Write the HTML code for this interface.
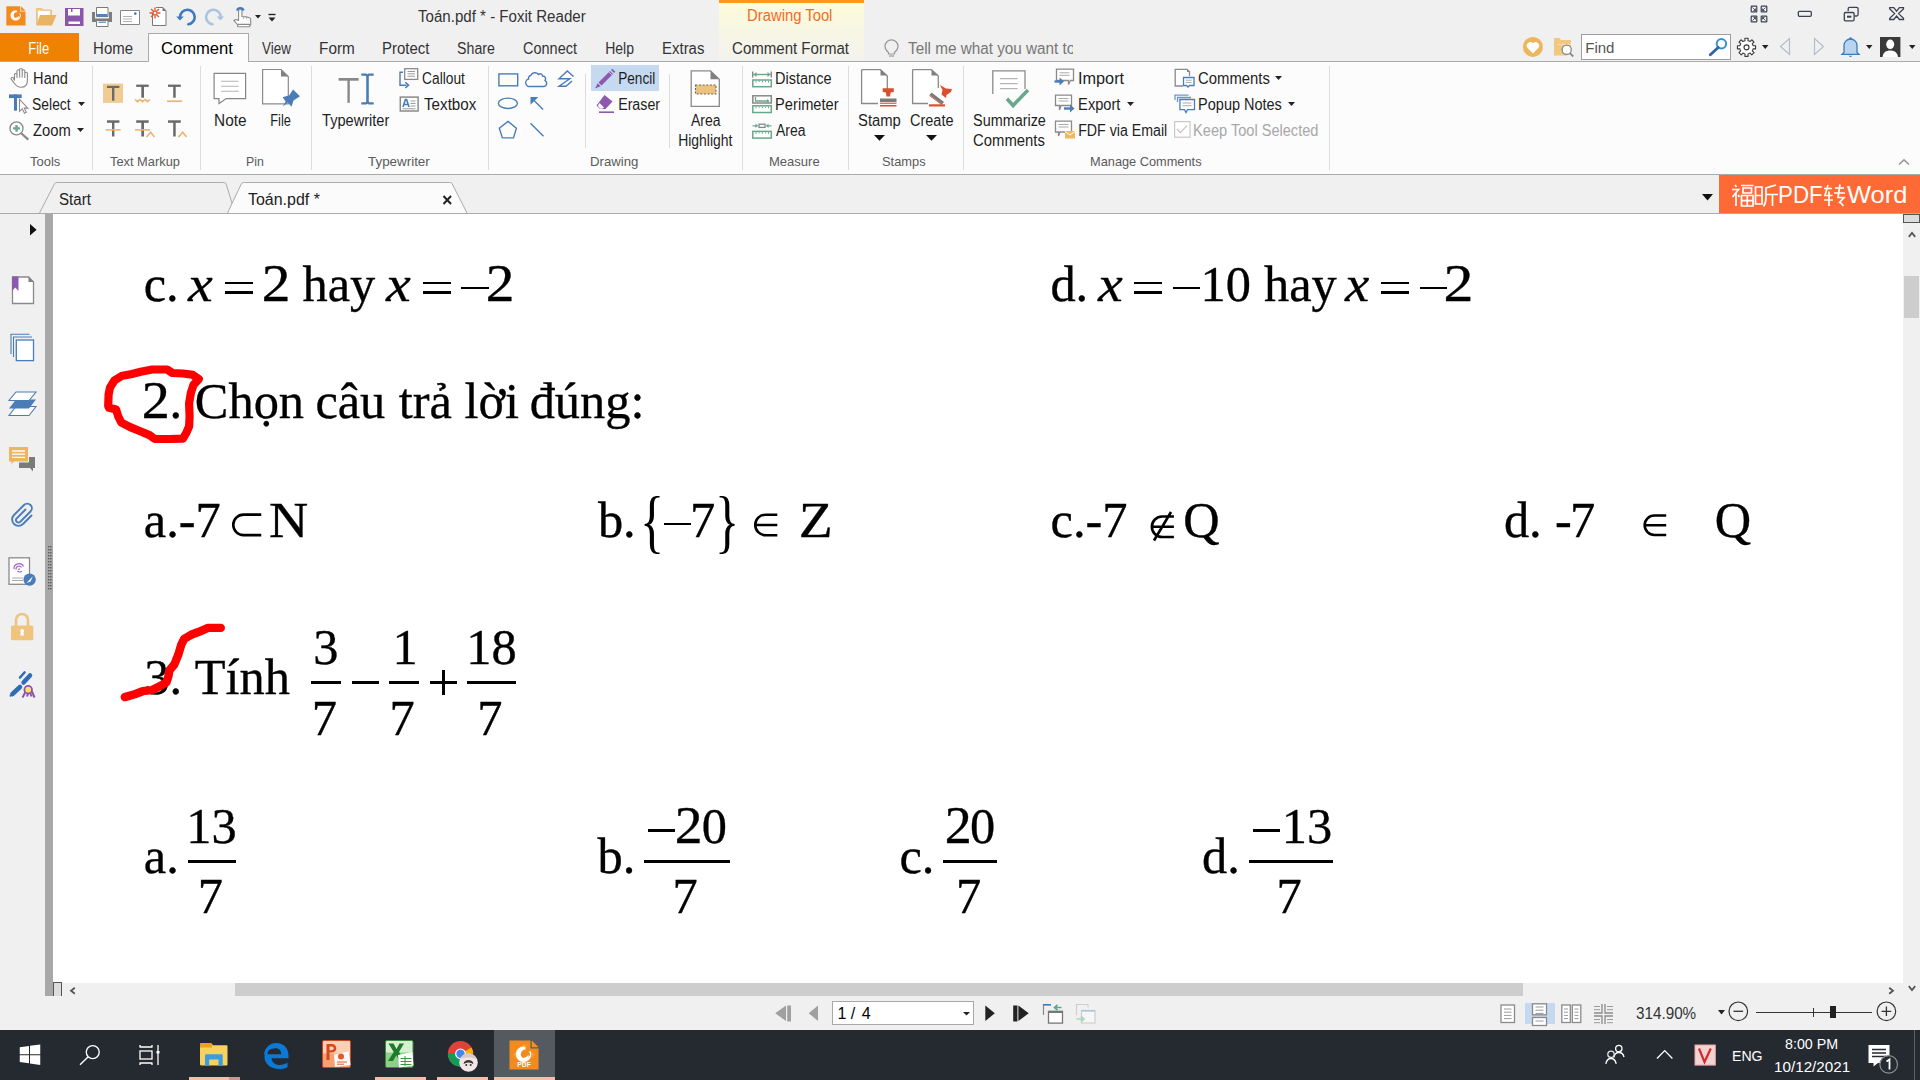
<!DOCTYPE html>
<html><head><meta charset="utf-8">
<style>
*{margin:0;padding:0;box-sizing:border-box}
html,body{width:1920px;height:1080px;overflow:hidden;background:#f0f0f0;font-family:"Liberation Sans",sans-serif;color:#1e1e1e}
.a{position:absolute}
.t{position:absolute;white-space:nowrap;line-height:1;font-size:15px}
.s{position:absolute;white-space:nowrap;line-height:1;font-family:"Liberation Serif",serif;color:#000}
svg{position:absolute;overflow:visible}
</style></head><body>
<!-- title bar -->
<div class="a" id="titlebar" style="left:0;top:0;width:1920px;height:33px;background:#f0f0f0"></div>
<!-- drawing tool context header -->
<div class="a" style="left:719px;top:0;width:145px;height:61px;background:linear-gradient(#fdfcd9,#f6f5e6 60%,#f3f3ee)"></div>
<div class="a" style="left:719px;top:0;width:145px;height:3px;background:#fb9a18"></div>
<!-- tab row -->
<div class="a" style="left:0;top:33px;width:79px;height:28px;background:#ef8200"></div>
<div class="a" style="left:148px;top:33px;width:101px;height:29px;background:#fcfcfc;border:1px solid #ababab;border-bottom:none"></div>
<!-- ribbon body -->
<div class="a" style="left:0;top:61px;width:1920px;height:114px;background:#fcfcfc;border-top:1px solid #ababab;border-bottom:1px solid #ababab"></div>
<div class="a" style="left:149px;top:61px;width:99px;height:2px;background:#fcfcfc"></div>
<!-- doc tab bar -->
<div class="a" style="left:0;top:175px;width:1920px;height:39px;background:#f0f0f0;border-bottom:1px solid #ababab"></div>
<!-- left nav -->
<div class="a" style="left:0;top:214px;width:45px;height:782px;background:#f0f0f0"></div>
<div class="a" style="left:45px;top:214px;width:8px;height:782px;background:#a8a8a8"></div>
<!-- doc area -->
<div class="a" id="doc" style="left:53px;top:214px;width:1850px;height:769px;background:#fff"></div>
<!-- v scrollbar -->
<div class="a" style="left:1903px;top:214px;width:17px;height:782px;background:#f0f0f0"></div>
<div class="a" style="left:1904px;top:276px;width:15px;height:42px;background:#cdcdcd"></div>
<!-- h scrollbar -->
<div class="a" style="left:53px;top:983px;width:1850px;height:13px;background:#f0f0f0"></div>
<div class="a" style="left:235px;top:983px;width:1288px;height:13px;background:#cdcdcd"></div>
<!-- status bar -->
<div class="a" style="left:0;top:996px;width:1920px;height:34px;background:#f0f0f0"></div>
<!-- taskbar -->
<div class="a" style="left:0;top:1030px;width:1920px;height:50px;background:#252a31"></div>
<div class="t" style="left:143.68px;top:255.50px;font-size:50.40px;line-height:56px;font-family:'Liberation Serif',serif;color:#000;-webkit-text-stroke:0.35px #000">c.</div>
<div class="t" style="left:187.62px;top:255.50px;font-size:50.40px;line-height:56px;font-family:'Liberation Serif',serif;font-style:italic;color:#000;-webkit-text-stroke:0.35px #000;transform:scaleX(1.1054);transform-origin:-0.62px 0">x</div>
<div class="a" style="left:225px;top:281.8px;width:27.5px;height:2.6px;background:#000;"></div>
<div class="a" style="left:225px;top:291.1px;width:27.5px;height:2.6px;background:#000;"></div>
<div class="t" style="left:261.79px;top:255.50px;font-size:50.40px;line-height:56px;font-family:'Liberation Serif',serif;color:#000;-webkit-text-stroke:0.35px #000;transform:scale(1.138,1.05);transform-origin:2.21px 45px">2</div>
<div class="t" style="left:302.51px;top:255.50px;font-size:50.40px;line-height:56px;font-family:'Liberation Serif',serif;color:#000;-webkit-text-stroke:0.35px #000">hay</div>
<div class="t" style="left:385.62px;top:255.50px;font-size:50.40px;line-height:56px;font-family:'Liberation Serif',serif;font-style:italic;color:#000;-webkit-text-stroke:0.35px #000;transform:scaleX(1.1054);transform-origin:-0.62px 0">x</div>
<div class="a" style="left:423px;top:281.8px;width:27.5px;height:2.6px;background:#000;"></div>
<div class="a" style="left:423px;top:291.1px;width:27.5px;height:2.6px;background:#000;"></div>
<div class="a" style="left:461px;top:286.5px;width:28px;height:2.6px;background:#000;"></div>
<div class="t" style="left:485.79px;top:255.50px;font-size:50.40px;line-height:56px;font-family:'Liberation Serif',serif;color:#000;-webkit-text-stroke:0.35px #000;transform:scale(1.138,1.05);transform-origin:2.21px 45px">2</div>
<div class="t" style="left:1050.38px;top:255.50px;font-size:50.40px;line-height:56px;font-family:'Liberation Serif',serif;color:#000;-webkit-text-stroke:0.35px #000">d.</div>
<div class="t" style="left:1097.62px;top:255.50px;font-size:50.40px;line-height:56px;font-family:'Liberation Serif',serif;font-style:italic;color:#000;-webkit-text-stroke:0.35px #000;transform:scaleX(1.1054);transform-origin:-0.62px 0">x</div>
<div class="a" style="left:1134px;top:281.8px;width:27.5px;height:2.6px;background:#000;"></div>
<div class="a" style="left:1134px;top:291.1px;width:27.5px;height:2.6px;background:#000;"></div>
<div class="a" style="left:1173px;top:286.5px;width:27px;height:2.6px;background:#000;"></div>
<div class="t" style="left:1200.57px;top:255.50px;font-size:50.40px;line-height:56px;font-family:'Liberation Serif',serif;color:#000;-webkit-text-stroke:0.35px #000">10</div>
<div class="t" style="left:1264.01px;top:255.50px;font-size:50.40px;line-height:56px;font-family:'Liberation Serif',serif;color:#000;-webkit-text-stroke:0.35px #000">hay</div>
<div class="t" style="left:1345.32px;top:255.50px;font-size:50.40px;line-height:56px;font-family:'Liberation Serif',serif;font-style:italic;color:#000;-webkit-text-stroke:0.35px #000;transform:scaleX(1.0833);transform-origin:-0.62px 0">x</div>
<div class="a" style="left:1381px;top:281.8px;width:27.5px;height:2.6px;background:#000;"></div>
<div class="a" style="left:1381px;top:291.1px;width:27.5px;height:2.6px;background:#000;"></div>
<div class="a" style="left:1419.7px;top:286.5px;width:27px;height:2.6px;background:#000;"></div>
<div class="t" style="left:1444.39px;top:255.50px;font-size:50.40px;line-height:56px;font-family:'Liberation Serif',serif;color:#000;-webkit-text-stroke:0.35px #000;transform:scale(1.188,1.05);transform-origin:2.21px 45px">2</div>
<div class="t" style="left:142.49px;top:372.50px;font-size:50.40px;line-height:56px;font-family:'Liberation Serif',serif;color:#000;-webkit-text-stroke:0.35px #000;transform:scale(1.114,1.05);transform-origin:2.21px 45px">2</div>
<div class="t" style="left:169.48px;top:372.50px;font-size:50.40px;line-height:56px;font-family:'Liberation Serif',serif;color:#000;-webkit-text-stroke:0.35px #000">.</div>
<div class="t" style="left:194.83px;top:372.50px;font-size:50.40px;line-height:56px;font-family:'Liberation Serif',serif;color:#000;-webkit-text-stroke:0.35px #000">Chọn</div>
<div class="t" style="left:315.38px;top:372.50px;font-size:50.40px;line-height:56px;font-family:'Liberation Serif',serif;color:#000;-webkit-text-stroke:0.35px #000">câu</div>
<div class="t" style="left:398.81px;top:372.50px;font-size:50.40px;line-height:56px;font-family:'Liberation Serif',serif;color:#000;-webkit-text-stroke:0.35px #000">trả</div>
<div class="t" style="left:464.39px;top:372.50px;font-size:50.40px;line-height:56px;font-family:'Liberation Serif',serif;color:#000;-webkit-text-stroke:0.35px #000">lời</div>
<div class="t" style="left:529.68px;top:372.50px;font-size:50.40px;line-height:56px;font-family:'Liberation Serif',serif;color:#000;-webkit-text-stroke:0.35px #000">đúng:</div>
<div class="t" style="left:143.83px;top:491.80px;font-size:50.40px;line-height:56px;font-family:'Liberation Serif',serif;color:#000;-webkit-text-stroke:0.35px #000">a.-7</div>
<svg style="left:226px;top:510px;" width="40" height="30" viewBox="0 0 40 30"><path d="M35.25 4.6H17.5A10.25 10.25 0 0 0 17.5 25.1H35.25" fill="none" stroke="#000" stroke-width="2.6"/></svg>
<div class="t" style="left:269.15px;top:491.80px;font-size:50.40px;line-height:56px;font-family:'Liberation Serif',serif;color:#000;-webkit-text-stroke:0.35px #000;transform:scaleX(1.0773);transform-origin:1.45px 0">N</div>
<div class="t" style="left:597.90px;top:491.80px;font-size:50.40px;line-height:56px;font-family:'Liberation Serif',serif;color:#000;-webkit-text-stroke:0.35px #000">b.</div>
<div class="t" style="left:640.02px;top:497.80px;font-size:50.40px;line-height:56px;font-family:'Liberation Serif',serif;color:#000;transform:scaleY(1.38);transform-origin:0 39.0px">{</div>
<div class="a" style="left:664.2px;top:522.5px;width:26.4px;height:2.6px;background:#000;"></div>
<div class="t" style="left:689.98px;top:491.80px;font-size:50.40px;line-height:56px;font-family:'Liberation Serif',serif;color:#000;-webkit-text-stroke:0.35px #000">7</div>
<div class="t" style="left:715.12px;top:497.80px;font-size:50.40px;line-height:56px;font-family:'Liberation Serif',serif;color:#000;transform:scaleY(1.38);transform-origin:0 39.0px">}</div>
<svg style="left:750px;top:510px;" width="40" height="30" viewBox="0 0 40 30"><path d="M27.3 4.7H15.5A10.25 10.25 0 0 0 15.5 25.2H27.3M6.2 14.95H27.3" fill="none" stroke="#000" stroke-width="2.6"/></svg>
<div class="t" style="left:799.29px;top:491.80px;font-size:50.40px;line-height:56px;font-family:'Liberation Serif',serif;color:#000;-webkit-text-stroke:0.35px #000;transform:scaleX(1.1047);transform-origin:2.41px 0">Z</div>
<div class="t" style="left:1050.58px;top:491.80px;font-size:50.40px;line-height:56px;font-family:'Liberation Serif',serif;color:#000;-webkit-text-stroke:0.35px #000">c.-7</div>
<svg style="left:1145px;top:505px;" width="40" height="40" viewBox="0 0 40 40"><path d="M28.9 11.5H17.1A10.25 10.25 0 0 0 17.1 32H28.9M7.8 21.75H28.9M9 35.5L26 7" fill="none" stroke="#000" stroke-width="2.6"/></svg>
<div class="t" style="left:1183.23px;top:491.80px;font-size:50.40px;line-height:56px;font-family:'Liberation Serif',serif;color:#000;-webkit-text-stroke:0.35px #000">Q</div>
<div class="t" style="left:1503.93px;top:491.80px;font-size:50.40px;line-height:56px;font-family:'Liberation Serif',serif;color:#000;-webkit-text-stroke:0.35px #000">d.</div>
<div class="t" style="left:1554.93px;top:491.80px;font-size:50.40px;line-height:56px;font-family:'Liberation Serif',serif;color:#000;-webkit-text-stroke:0.35px #000">-</div>
<div class="t" style="left:1570.08px;top:491.80px;font-size:50.40px;line-height:56px;font-family:'Liberation Serif',serif;color:#000;-webkit-text-stroke:0.35px #000">7</div>
<svg style="left:1640px;top:510px;" width="40" height="30" viewBox="0 0 40 30"><path d="M26.2 5.5H14.4A9.75 9.75 0 0 0 14.4 25H26.2M5.5 15.25H26.2" fill="none" stroke="#000" stroke-width="2.6"/></svg>
<div class="t" style="left:1714.73px;top:491.80px;font-size:50.40px;line-height:56px;font-family:'Liberation Serif',serif;color:#000;-webkit-text-stroke:0.35px #000">Q</div>
<div class="t" style="left:144.19px;top:648.70px;font-size:50.40px;line-height:56px;font-family:'Liberation Serif',serif;color:#000;-webkit-text-stroke:0.35px #000">3.</div>
<div class="t" style="left:194.69px;top:648.70px;font-size:50.40px;line-height:56px;font-family:'Liberation Serif',serif;color:#000;-webkit-text-stroke:0.35px #000">Tính</div>
<div class="t" style="left:313.19px;top:619.30px;font-size:50.40px;line-height:56px;font-family:'Liberation Serif',serif;color:#000;-webkit-text-stroke:0.35px #000">3</div>
<div class="a" style="left:311px;top:681px;width:30.2px;height:3px;background:#000;"></div>
<div class="t" style="left:311.68px;top:690.00px;font-size:50.40px;line-height:56px;font-family:'Liberation Serif',serif;color:#000;-webkit-text-stroke:0.35px #000">7</div>
<div class="a" style="left:352px;top:681px;width:26.8px;height:3px;background:#000;"></div>
<div class="t" style="left:392.47px;top:619.30px;font-size:50.40px;line-height:56px;font-family:'Liberation Serif',serif;color:#000;-webkit-text-stroke:0.35px #000">1</div>
<div class="a" style="left:388.8px;top:681px;width:30.1px;height:3px;background:#000;"></div>
<div class="t" style="left:389.58px;top:690.00px;font-size:50.40px;line-height:56px;font-family:'Liberation Serif',serif;color:#000;-webkit-text-stroke:0.35px #000">7</div>
<div class="a" style="left:430px;top:681px;width:26.5px;height:3px;background:#000;"></div>
<div class="a" style="left:441.9px;top:669.8px;width:2.8px;height:25.2px;background:#000;"></div>
<div class="t" style="left:466.27px;top:619.30px;font-size:50.40px;line-height:56px;font-family:'Liberation Serif',serif;color:#000;-webkit-text-stroke:0.35px #000">18</div>
<div class="a" style="left:467px;top:681px;width:49.3px;height:3px;background:#000;"></div>
<div class="t" style="left:477.18px;top:690.00px;font-size:50.40px;line-height:56px;font-family:'Liberation Serif',serif;color:#000;-webkit-text-stroke:0.35px #000">7</div>
<div class="t" style="left:143.83px;top:827.60px;font-size:50.40px;line-height:56px;font-family:'Liberation Serif',serif;color:#000;-webkit-text-stroke:0.35px #000">a.</div>
<div class="t" style="left:186.37px;top:798.10px;font-size:50.40px;line-height:56px;font-family:'Liberation Serif',serif;color:#000;-webkit-text-stroke:0.35px #000">13</div>
<div class="a" style="left:187.8px;top:860.2px;width:48.7px;height:3px;background:#000;"></div>
<div class="t" style="left:197.68px;top:868.30px;font-size:50.40px;line-height:56px;font-family:'Liberation Serif',serif;color:#000;-webkit-text-stroke:0.35px #000">7</div>
<div class="t" style="left:597.60px;top:827.60px;font-size:50.40px;line-height:56px;font-family:'Liberation Serif',serif;color:#000;-webkit-text-stroke:0.35px #000">b.</div>
<div class="a" style="left:647.6px;top:829.2px;width:27.4px;height:2.6px;background:#000;"></div>
<div class="t" style="left:674.89px;top:798.10px;font-size:50.40px;line-height:56px;font-family:'Liberation Serif',serif;color:#000;-webkit-text-stroke:0.35px #000;transform:scale(1.104,1.05);transform-origin:2.21px 45px">2</div>
<div class="t" style="left:701.68px;top:798.10px;font-size:50.40px;line-height:56px;font-family:'Liberation Serif',serif;color:#000;-webkit-text-stroke:0.35px #000">0</div>
<div class="a" style="left:644px;top:860.2px;width:86.1px;height:3px;background:#000;"></div>
<div class="t" style="left:672.58px;top:868.30px;font-size:50.40px;line-height:56px;font-family:'Liberation Serif',serif;color:#000;-webkit-text-stroke:0.35px #000">7</div>
<div class="t" style="left:899.48px;top:827.60px;font-size:50.40px;line-height:56px;font-family:'Liberation Serif',serif;color:#000;-webkit-text-stroke:0.35px #000">c.</div>
<div class="t" style="left:944.99px;top:798.10px;font-size:50.40px;line-height:56px;font-family:'Liberation Serif',serif;color:#000;-webkit-text-stroke:0.35px #000;transform:scale(1.069,1.05);transform-origin:2.21px 45px">2</div>
<div class="t" style="left:969.88px;top:798.10px;font-size:50.40px;line-height:56px;font-family:'Liberation Serif',serif;color:#000;-webkit-text-stroke:0.35px #000">0</div>
<div class="a" style="left:943px;top:860.2px;width:53.9px;height:3px;background:#000;"></div>
<div class="t" style="left:955.88px;top:868.30px;font-size:50.40px;line-height:56px;font-family:'Liberation Serif',serif;color:#000;-webkit-text-stroke:0.35px #000">7</div>
<div class="t" style="left:1201.98px;top:827.60px;font-size:50.40px;line-height:56px;font-family:'Liberation Serif',serif;color:#000;-webkit-text-stroke:0.35px #000">d.</div>
<div class="a" style="left:1252.6px;top:829.2px;width:27.4px;height:2.6px;background:#000;"></div>
<div class="t" style="left:1281.87px;top:798.10px;font-size:50.40px;line-height:56px;font-family:'Liberation Serif',serif;color:#000;-webkit-text-stroke:0.35px #000">13</div>
<div class="a" style="left:1248.8px;top:860.2px;width:83.9px;height:3px;background:#000;"></div>
<div class="t" style="left:1276.38px;top:868.30px;font-size:50.40px;line-height:56px;font-family:'Liberation Serif',serif;color:#000;-webkit-text-stroke:0.35px #000">7</div>
<svg style="left:0;top:0" width="1920" height="1080" viewBox="0 0 1920 1080"><path d="M108.2 406.0L108.6 394.6L110.0 387.6L114.4 380.5L121.4 376.1L131.9 373.9L140.7 371.7L152.2 369.5L167.1 369.5L172.4 373.0L183.0 373.5L192.7 374.8L198.8 379.2L193.5 384.9L190.9 392.8L189.1 403.4L189.6 416.6L189.1 426.3L186.5 432.4L183.0 438.6L169.8 439.0L154.8 439.0L149.5 435.1L139.0 430.7L130.2 427.1L121.4 422.7L118.3 416.6L116.1 409.5L109.1 407.8Z" fill="none" stroke="#fe0000" stroke-width="8.2" stroke-linejoin="round" stroke-linecap="round"/><path d="M124.8 697.1L134.7 694.2L142.7 691.2L151.6 690.2L159.5 686.3L166.4 682.3L168.4 676.4L169.4 670.4L174.3 664.5L178.3 654.6L181.3 644.7L184.2 638.8L191.1 634.8L199 631.8L208 627.9L220.8 627.9" fill="none" stroke="#fe0000" stroke-width="8.4" stroke-linejoin="round" stroke-linecap="round"/></svg>
<div class="a" style="left:591px;top:65px;width:68px;height:26px;background:#c5d9f1;"></div>
<div class="a" style="left:92px;top:66px;width:1px;height:104px;background:#dcdcdc;"></div>
<div class="a" style="left:200px;top:66px;width:1px;height:104px;background:#dcdcdc;"></div>
<div class="a" style="left:311px;top:66px;width:1px;height:104px;background:#dcdcdc;"></div>
<div class="a" style="left:488px;top:66px;width:1px;height:104px;background:#dcdcdc;"></div>
<div class="a" style="left:742px;top:66px;width:1px;height:104px;background:#dcdcdc;"></div>
<div class="a" style="left:848px;top:66px;width:1px;height:104px;background:#dcdcdc;"></div>
<div class="a" style="left:963px;top:66px;width:1px;height:104px;background:#dcdcdc;"></div>
<div class="a" style="left:1329px;top:66px;width:1px;height:104px;background:#dcdcdc;"></div>
<div class="a" style="left:585px;top:74px;width:1px;height:74px;background:#dcdcdc;"></div>
<div class="a" style="left:669px;top:74px;width:1px;height:74px;background:#dcdcdc;"></div>
<svg style="left:0px;top:174px;" width="1920" height="40" viewBox="0 0 1920 40"><path d="M39.5 39L54.6 9.5Q55.5 8.5 57 8.5H223Q225 8.5 226 9.5L235 39" fill="#f0f0f0" stroke="#ababab" stroke-width="1"/><path d="M227.5 39L241.5 9.5Q242.5 8.5 244.5 8.5H449.5Q451.5 8.5 452 9.5L467 39" fill="#fbfbfb" stroke="#ababab" stroke-width="1"/><path d="M443.5 22L451 30M451 22L443.5 30" stroke="#222" stroke-width="2"/></svg>
<svg style="left:1702px;top:193.5px;" width="11" height="6.5" viewBox="0 0 11 6.5"><path d="M0 0H11L5.5 6.5Z" fill="#111"/></svg>
<div class="a" style="left:1719px;top:175px;width:201px;height:38px;background:#fe6a35;"></div>
<div class="t" style="left:1777.83px;top:180.50px;font-size:24.00px;line-height:27px;font-family:'Liberation Sans',sans-serif;color:#fff;transform:scaleX(0.93);transform-origin:left">PDF</div>
<div class="t" style="left:1846.79px;top:180.50px;font-size:24.00px;line-height:27px;font-family:'Liberation Sans',sans-serif;color:#fff;transform:scaleX(1.06);transform-origin:left">Word</div>
<svg style="left:1719px;top:175px;" width="130" height="38" viewBox="0 0 130 38"><g fill="none" stroke="#fff" stroke-width="1.7"><path d="M16 10L17.5 12M13 14.5H19.5L13.5 22M17 18V31M19 20L20.5 22"/><path d="M22 10.5H34.5M24 13H32.5V18H24ZM22.5 20.5H34V31H22.5ZM28.25 20.5V31M22.5 25.7H34"/><path d="M36.5 12H43V29H36.5ZM36.5 20.5H43"/><path d="M57 10L47 13V22Q47 28 44.5 31.5M47 19.5H59M53.5 19.5V31"/><path d="M105 13.5H113M109 10L106 20.5H113.5M110 16.5V31M105 25H114"/><path d="M116 13H125M115 18H126M121 9.5L119 22.5H125L120 28M121 27L124.5 31"/></g></svg>
<div class="t" style="left:418.39px;top:7.70px;font-size:16.00px;line-height:17px;font-family:'Liberation Sans',sans-serif;color:#333;transform:scaleX(0.9427);transform-origin:0.36px 0">Toán.pdf * - Foxit Reader</div>
<div class="t" style="left:747.44px;top:7.30px;font-size:16.00px;line-height:17px;font-family:'Liberation Sans',sans-serif;color:#f26c1f;transform:scaleX(0.9252);transform-origin:1.31px 0">Drawing Tool</div>
<div class="t" style="left:28.19px;top:40.00px;font-size:16.00px;line-height:17px;font-family:'Liberation Sans',sans-serif;color:#fff;transform:scaleX(0.8103);transform-origin:1.31px 0">File</div>
<div class="t" style="left:93.19px;top:40.00px;font-size:16.00px;line-height:17px;font-family:'Liberation Sans',sans-serif;color:#333;transform:scaleX(0.9347);transform-origin:1.31px 0">Home</div>
<div class="t" style="left:261.93px;top:40.00px;font-size:16.00px;line-height:17px;font-family:'Liberation Sans',sans-serif;color:#333;transform:scaleX(0.8370);transform-origin:0.07px 0">View</div>
<div class="t" style="left:319.19px;top:40.00px;font-size:16.00px;line-height:17px;font-family:'Liberation Sans',sans-serif;color:#333;transform:scaleX(0.9582);transform-origin:1.31px 0">Form</div>
<div class="t" style="left:381.69px;top:40.00px;font-size:16.00px;line-height:17px;font-family:'Liberation Sans',sans-serif;color:#333;transform:scaleX(0.9339);transform-origin:1.31px 0">Protect</div>
<div class="t" style="left:457.27px;top:40.00px;font-size:16.00px;line-height:17px;font-family:'Liberation Sans',sans-serif;color:#333;transform:scaleX(0.8847);transform-origin:0.73px 0">Share</div>
<div class="t" style="left:523.19px;top:40.00px;font-size:16.00px;line-height:17px;font-family:'Liberation Sans',sans-serif;color:#333;transform:scaleX(0.9034);transform-origin:0.81px 0">Connect</div>
<div class="t" style="left:604.69px;top:40.00px;font-size:16.00px;line-height:17px;font-family:'Liberation Sans',sans-serif;color:#333;transform:scaleX(0.8732);transform-origin:1.31px 0">Help</div>
<div class="t" style="left:661.69px;top:40.00px;font-size:16.00px;line-height:17px;font-family:'Liberation Sans',sans-serif;color:#333;transform:scaleX(0.9320);transform-origin:1.31px 0">Extras</div>
<div class="t" style="left:732.19px;top:40.00px;font-size:16.00px;line-height:17px;font-family:'Liberation Sans',sans-serif;color:#333;transform:scaleX(0.9390);transform-origin:0.81px 0">Comment Format</div>
<div class="t" style="left:161.17px;top:39.30px;font-size:16.40px;line-height:18px;font-family:'Liberation Sans',sans-serif;color:#000;transform:scaleX(1.0124);transform-origin:0.83px 0">Comment</div>
<div class="t" style="left:907.64px;top:40.00px;font-size:16.00px;line-height:17px;font-family:'Liberation Sans',sans-serif;color:#777;transform:scaleX(0.9549);transform-origin:0.36px 0">Tell me what you want to</div>
<div class="t" style="left:32.59px;top:70.00px;font-size:16.00px;line-height:17px;font-family:'Liberation Sans',sans-serif;color:#1e1e1e;transform:scaleX(0.9107);transform-origin:1.31px 0">Hand</div>
<div class="t" style="left:32.47px;top:96.00px;font-size:16.00px;line-height:17px;font-family:'Liberation Sans',sans-serif;color:#1e1e1e;transform:scaleX(0.8665);transform-origin:0.73px 0">Select</div>
<div class="t" style="left:32.74px;top:122.00px;font-size:16.00px;line-height:17px;font-family:'Liberation Sans',sans-serif;color:#1e1e1e;transform:scaleX(0.9215);transform-origin:0.51px 0">Zoom</div>
<div class="t" style="left:213.69px;top:111.60px;font-size:16.00px;line-height:17px;font-family:'Liberation Sans',sans-serif;color:#1e1e1e;transform:scaleX(0.9599);transform-origin:1.31px 0">Note</div>
<div class="t" style="left:269.69px;top:111.60px;font-size:16.00px;line-height:17px;font-family:'Liberation Sans',sans-serif;color:#1e1e1e;transform:scaleX(0.7997);transform-origin:1.31px 0">File</div>
<div class="t" style="left:321.64px;top:111.60px;font-size:16.00px;line-height:17px;font-family:'Liberation Sans',sans-serif;color:#1e1e1e;transform:scaleX(0.9115);transform-origin:0.36px 0">Typewriter</div>
<div class="t" style="left:422.19px;top:70.00px;font-size:16.00px;line-height:17px;font-family:'Liberation Sans',sans-serif;color:#1e1e1e;transform:scaleX(0.8593);transform-origin:0.81px 0">Callout</div>
<div class="t" style="left:423.64px;top:96.00px;font-size:16.00px;line-height:17px;font-family:'Liberation Sans',sans-serif;color:#1e1e1e;transform:scaleX(0.9489);transform-origin:0.36px 0">Textbox</div>
<div class="t" style="left:617.69px;top:70.00px;font-size:16.00px;line-height:17px;font-family:'Liberation Sans',sans-serif;color:#1e1e1e;transform:scaleX(0.8496);transform-origin:1.31px 0">Pencil</div>
<div class="t" style="left:617.69px;top:96.00px;font-size:16.00px;line-height:17px;font-family:'Liberation Sans',sans-serif;color:#1e1e1e;transform:scaleX(0.8892);transform-origin:1.31px 0">Eraser</div>
<div class="t" style="left:690.97px;top:111.60px;font-size:16.00px;line-height:17px;font-family:'Liberation Sans',sans-serif;color:#1e1e1e;transform:scaleX(0.8737);transform-origin:0.03px 0">Area</div>
<div class="t" style="left:677.69px;top:131.60px;font-size:16.00px;line-height:17px;font-family:'Liberation Sans',sans-serif;color:#1e1e1e;transform:scaleX(0.8713);transform-origin:1.31px 0">Highlight</div>
<div class="t" style="left:774.69px;top:70.00px;font-size:16.00px;line-height:17px;font-family:'Liberation Sans',sans-serif;color:#1e1e1e;transform:scaleX(0.9049);transform-origin:1.31px 0">Distance</div>
<div class="t" style="left:774.69px;top:96.00px;font-size:16.00px;line-height:17px;font-family:'Liberation Sans',sans-serif;color:#1e1e1e;transform:scaleX(0.9148);transform-origin:1.31px 0">Perimeter</div>
<div class="t" style="left:775.97px;top:122.00px;font-size:16.00px;line-height:17px;font-family:'Liberation Sans',sans-serif;color:#1e1e1e;transform:scaleX(0.8737);transform-origin:0.03px 0">Area</div>
<div class="t" style="left:858.27px;top:111.60px;font-size:16.00px;line-height:17px;font-family:'Liberation Sans',sans-serif;color:#1e1e1e;transform:scaleX(0.9254);transform-origin:0.73px 0">Stamp</div>
<div class="t" style="left:909.69px;top:111.60px;font-size:16.00px;line-height:17px;font-family:'Liberation Sans',sans-serif;color:#1e1e1e;transform:scaleX(0.9032);transform-origin:0.81px 0">Create</div>
<div class="t" style="left:973.27px;top:111.60px;font-size:16.00px;line-height:17px;font-family:'Liberation Sans',sans-serif;color:#1e1e1e;transform:scaleX(0.8997);transform-origin:0.73px 0">Summarize</div>
<div class="t" style="left:973.19px;top:131.60px;font-size:16.00px;line-height:17px;font-family:'Liberation Sans',sans-serif;color:#1e1e1e;transform:scaleX(0.9281);transform-origin:0.81px 0">Comments</div>
<div class="t" style="left:1078.02px;top:70.00px;font-size:16.00px;line-height:17px;font-family:'Liberation Sans',sans-serif;color:#1e1e1e;transform:scaleX(1.0171);transform-origin:1.48px 0">Import</div>
<div class="t" style="left:1078.19px;top:96.00px;font-size:16.00px;line-height:17px;font-family:'Liberation Sans',sans-serif;color:#1e1e1e;transform:scaleX(0.9149);transform-origin:1.31px 0">Export</div>
<div class="t" style="left:1078.19px;top:122.00px;font-size:16.00px;line-height:17px;font-family:'Liberation Sans',sans-serif;color:#1e1e1e;transform:scaleX(0.8871);transform-origin:1.31px 0">FDF via Email</div>
<div class="t" style="left:1198.19px;top:70.00px;font-size:16.00px;line-height:17px;font-family:'Liberation Sans',sans-serif;color:#1e1e1e;transform:scaleX(0.9281);transform-origin:0.81px 0">Comments</div>
<div class="t" style="left:1197.69px;top:96.00px;font-size:16.00px;line-height:17px;font-family:'Liberation Sans',sans-serif;color:#1e1e1e;transform:scaleX(0.9049);transform-origin:1.31px 0">Popup Notes</div>
<div class="t" style="left:1192.69px;top:122.00px;font-size:16.00px;line-height:17px;font-family:'Liberation Sans',sans-serif;color:#a8a8a8;transform:scaleX(0.9104);transform-origin:1.31px 0">Keep Tool Selected</div>
<div class="t" style="left:29.71px;top:154.00px;font-size:13.00px;line-height:15px;font-family:'Liberation Sans',sans-serif;color:#5a5a5a;transform:scaleX(0.9991);transform-origin:0.29px 0">Tools</div>
<div class="t" style="left:109.71px;top:154.00px;font-size:13.00px;line-height:15px;font-family:'Liberation Sans',sans-serif;color:#5a5a5a;transform:scaleX(0.9873);transform-origin:0.29px 0">Text Markup</div>
<div class="t" style="left:245.93px;top:154.00px;font-size:13.00px;line-height:15px;font-family:'Liberation Sans',sans-serif;color:#5a5a5a;transform:scaleX(0.9480);transform-origin:1.07px 0">Pin</div>
<div class="t" style="left:367.71px;top:154.00px;font-size:13.00px;line-height:15px;font-family:'Liberation Sans',sans-serif;color:#5a5a5a;transform:scaleX(1.0304);transform-origin:0.29px 0">Typewriter</div>
<div class="t" style="left:589.93px;top:154.00px;font-size:13.00px;line-height:15px;font-family:'Liberation Sans',sans-serif;color:#5a5a5a;transform:scaleX(1.0157);transform-origin:1.07px 0">Drawing</div>
<div class="t" style="left:768.93px;top:154.00px;font-size:13.00px;line-height:15px;font-family:'Liberation Sans',sans-serif;color:#5a5a5a;transform:scaleX(1.0013);transform-origin:1.07px 0">Measure</div>
<div class="t" style="left:881.91px;top:154.00px;font-size:13.00px;line-height:15px;font-family:'Liberation Sans',sans-serif;color:#5a5a5a;transform:scaleX(0.9881);transform-origin:0.59px 0">Stamps</div>
<div class="t" style="left:1089.93px;top:154.00px;font-size:13.00px;line-height:15px;font-family:'Liberation Sans',sans-serif;color:#5a5a5a;transform:scaleX(0.9830);transform-origin:1.07px 0">Manage Comments</div>
<div class="t" style="left:59.27px;top:190.80px;font-size:16.00px;line-height:17px;font-family:'Liberation Sans',sans-serif;color:#222;transform:scaleX(0.9410);transform-origin:0.73px 0">Start</div>
<div class="t" style="left:247.64px;top:190.80px;font-size:16.00px;line-height:17px;font-family:'Liberation Sans',sans-serif;color:#222;transform:scaleX(0.9970);transform-origin:0.36px 0">Toán.pdf *</div>
<div class="t" style="left:1636.39px;top:1004.50px;font-size:16.00px;line-height:17px;font-family:'Liberation Sans',sans-serif;color:#333;transform:scaleX(0.9519);transform-origin:0.61px 0">314.90%</div>
<svg style="left:6px;top:6px;" width="20.5" height="20.5" viewBox="0 0 20.5 20.5"><g transform="scale(0.6406)"><path d="M0.5 0.5H22.5L30.5 8.5V30.5H0.5Z" fill="#f38a1e"/><path d="M23.5 0.5L30.5 7.5H23.5Z" fill="#f5901e"/><path d="M22.8 0V8.2H31" fill="none" stroke="#f0f0f0" stroke-width="1.2"/><circle cx="15" cy="14.8" r="8" fill="#fff"/><circle cx="16.9" cy="14.6" r="4.7" fill="#f38a1e"/><path d="M17 6.5Q21.5 7.5 23 11.5L20.5 11.8Q19 9.8 17 10Z" fill="#f38a1e"/><path d="M14.8 17.8Q17.8 18.6 19.8 15.8L20.6 16.5Q19.5 20 16.2 20.2Z" fill="#fff"/></g></svg>
<svg style="left:36px;top:7px;" width="21" height="19" viewBox="0 0 21 19"><path d="M0.5 1.5H6L7.5 3H15.5V17.5H0.5Z" fill="#f3cf98" stroke="#eec080"/><path d="M2 4H14V12H2Z" fill="#fff"/><path d="M4 8H20.5L16 18.5H0.5Z" fill="#e9b565"/></svg>
<svg style="left:65px;top:8px;" width="19" height="18" viewBox="0 0 19 18"><path d="M0 0H18.5V18H0Z" fill="#8b56a9"/><path d="M3 1H15V7.5H3Z" fill="#fff"/><path d="M6 1H7.5V4H6Z" fill="#8b56a9"/><path d="M3.5 13.5H15V16H3.5Z" fill="#fff"/></svg>
<svg style="left:92px;top:7px;" width="20" height="20" viewBox="0 0 20 20"><path d="M4.5 0.5H16V9.5H4.5Z" fill="#fff" stroke="#7a7a7a"/><path d="M5 7H15.5V9.5H5Z" fill="#4a86c5"/><path d="M0 5H3V11.5H17V5H20V15H0Z" fill="#7d7d7d"/><path d="M4.5 13.5H16V19.5H4.5Z" fill="#fff" stroke="#7a7a7a"/><path d="M6.5 15.2H14" stroke="#4a86c5" stroke-width="1.2"/></svg>
<svg style="left:120px;top:10px;" width="20" height="15" viewBox="0 0 20 15"><path d="M0.5 0.5H19.5V14.5H0.5Z" fill="#fff" stroke="#858585"/><path d="M3 6.5H12M3 9H12M3 11.5H12" stroke="#b0b0b0"/><circle cx="15.3" cy="3.6" r="1.3" fill="#3b78c0"/></svg>
<svg style="left:149px;top:6px;" width="20" height="21" viewBox="0 0 20 21"><path d="M3.5 6.5V19.5H17V5L14 1.5H7" fill="#fff" stroke="#7a7a7a"/><path d="M13.5 1L17.5 5H13.5Z" fill="#7a7a7a"/><g stroke="#e05a30" stroke-width="1.4"><path d="M6 1.5V12.5M0.5 7H11.5M2.1 3.1L9.9 10.9M9.9 3.1L2.1 10.9"/></g><circle cx="6" cy="7" r="1.3" fill="#fff"/></svg>
<svg style="left:172px;top:4px;" width="30" height="26" viewBox="0 0 30 26"><path d="M8.1 12.8A7.3 7.3 0 1 1 16.3 20.3" fill="none" stroke="#3d7ac0" stroke-width="2.6" stroke-linecap="round"/><path d="M4.2 12.4H11.8L7.9 16.4Z" fill="#3d7ac0"/></svg>
<svg style="left:198px;top:4px;" width="30" height="26" viewBox="0 0 30 26"><path d="M22.7 12.8A7.3 7.3 0 1 0 14.5 20.3" fill="none" stroke="#aac4df" stroke-width="2.6" stroke-linecap="round"/><path d="M18.7 12.4H26.3L22.4 16.4Z" fill="#aac4df"/></svg>
<svg style="left:233px;top:5px;" width="20" height="22" viewBox="0 0 20 22"><path d="M4.3 5.6A3.1 3.1 0 0 1 10.3 5.6" fill="none" stroke="#3d7ac0" stroke-width="2.6"/><path d="M5.6 15.5V5.2Q5.6 4.4 7.3 4.4Q8.9 4.4 8.9 5.2V11.5L13 11.9L16.5 12.8Q17.7 13.3 17.7 15V19.5L16.8 20.3H5.3L0.9 15.6Q2.6 13.8 5.6 15.5Z" fill="#fff" stroke="#8a8a8a" stroke-width="1.1" stroke-linejoin="round"/><rect x="4.6" y="19.4" width="12.2" height="2.4" rx="0.6" fill="#fff" stroke="#8a8a8a" stroke-width="1.1"/><path d="M10.5 12V14M13.5 12.3V14" stroke="#aaa" stroke-width="0.8"/></svg>
<svg style="left:255px;top:15px;" width="6" height="4" viewBox="0 0 6 4"><path d="M0 0H6L3 3.5Z" fill="#222"/></svg>
<svg style="left:268px;top:13.5px;" width="8" height="8" viewBox="0 0 8 8"><path d="M0.5 0.5H7.5" stroke="#222" stroke-width="1.4"/><path d="M0.5 3.5H7.5L4 7.5Z" fill="#222"/></svg>
<svg style="left:1750px;top:5px;" width="19" height="18" viewBox="0 0 19 18"><rect x="1.2" y="1.2" width="5.6" height="5.6" rx="0.6" fill="none" stroke="#3d4250" stroke-width="1.2"/><rect x="11.2" y="1.2" width="5.6" height="5.6" rx="0.6" fill="none" stroke="#3d4250" stroke-width="1.2"/><rect x="1.2" y="11.2" width="5.6" height="5.6" rx="0.6" fill="none" stroke="#3d4250" stroke-width="1.2"/><rect x="11.2" y="11.2" width="5.6" height="5.6" rx="0.6" fill="none" stroke="#3d4250" stroke-width="1.2"/><path d="M2.5 2.5L5.5 5.5M5.5 3.5V5.5H3.5M15.5 2.5L12.5 5.5M12.5 3.5V5.5H14.5M2.5 15.5L5.5 12.5M3.5 12.5H5.5V14.5M15.5 15.5L12.5 12.5M14.5 12.5H12.5V14.5" fill="none" stroke="#3d4250" stroke-width="0.9"/></svg>
<svg style="left:1797px;top:10px;" width="16" height="8" viewBox="0 0 16 8"><rect x="1.3" y="1.3" width="13" height="5" rx="1.2" fill="none" stroke="#3d4250" stroke-width="1.3"/></svg>
<svg style="left:1843px;top:6px;" width="17" height="16" viewBox="0 0 17 16"><path d="M5.2 5V2.8Q5.2 1.3 6.7 1.3H13.6Q15.1 1.3 15.1 2.8V8.5Q15.1 10 13.6 10H11.5" fill="none" stroke="#3d4250" stroke-width="1.3"/><rect x="1.3" y="6.5" width="9.8" height="8.4" rx="1.3" fill="#f0f0f0" stroke="#3d4250" stroke-width="1.3"/><rect x="4" y="9.7" width="4.3" height="2" fill="#3d4250"/></svg>
<svg style="left:1889px;top:7px;" width="16" height="14" viewBox="0 0 16 14"><path d="M0.7 0.7H4.8L7.6 4.2L10.4 0.7H14.5V1.9L9.6 6.6L14.5 11.3V12.5H10.4L7.6 9L4.8 12.5H0.7V11.3L5.6 6.6L0.7 1.9Z" fill="#f0f0f0" stroke="#3d4250" stroke-width="1.3"/></svg>
<svg style="left:10px;top:68px;" width="19" height="20" viewBox="0 0 19 20"><path d="M4.5 12.5V6.5A1.3 1.3 0 0 1 7 6.5V10V3A1.3 1.3 0 0 1 9.6 3V9.5V1.8A1.3 1.3 0 0 1 12.2 1.8V9.5V3A1.3 1.3 0 0 1 14.8 3V10V5.5A1.3 1.3 0 0 1 17.4 5.5V12.5C17.4 16.5 15 19.3 11 19.3C7.5 19.3 6 17.5 4.5 15.5L1.2 11.2A1.3 1.3 0 0 1 3.2 9.6Z" fill="#fff" stroke="#8a8a8a" stroke-width="1.1"/></svg>
<svg style="left:9px;top:94px;" width="20" height="20" viewBox="0 0 20 20"><path d="M0 0.4H12.7V4.1H0Z" fill="#4a7db8"/><path d="M5 0.4H8V16.7H5Z" fill="#4a7db8"/><path d="M10.5 5.3V17.3L13.3 14.8L15.5 19.2L17.3 18.3L15.2 14.1H18.8Z" fill="#fff" stroke="#8a8a8a" stroke-width="1.05"/></svg>
<svg style="left:9px;top:120px;" width="21" height="21" viewBox="0 0 21 21"><circle cx="7.5" cy="8.4" r="6.5" fill="#fff" stroke="#888" stroke-width="1.3"/><path d="M12.2 13.2L19.3 19.6" stroke="#888" stroke-width="2.2"/><path d="M7.5 5V11.8M4.1 8.4H10.9" stroke="#68a88d" stroke-width="2.3"/></svg>
<svg style="left:77.5px;top:102px;" width="7" height="4" viewBox="0 0 7 4"><path d="M0 0H7L3.5 4Z" fill="#222"/></svg>
<svg style="left:77px;top:128px;" width="7" height="4" viewBox="0 0 7 4"><path d="M0 0H7L3.5 4Z" fill="#222"/></svg>
<svg style="left:98px;top:76px;" width="94" height="66" viewBox="0 0 94 66"><rect x="5" y="7.6" width="20" height="19.3" fill="#f0cc92"/><g fill="#6a6a6a"><rect x="9" y="9.8" width="12.4" height="2.2"/><rect x="14" y="11" width="2.4" height="13.7"/><rect x="38.2" y="8.6" width="12.5" height="2.3"/><rect x="43.3" y="10" width="2.7" height="11.7"/><rect x="70" y="8.6" width="12.8" height="2.3"/><rect x="75.2" y="10" width="2.5" height="11.7"/><rect x="9" y="44.3" width="12.4" height="2.5"/><rect x="14" y="46" width="2.4" height="14.5"/><rect x="38.2" y="44.3" width="12.5" height="2.5"/><rect x="43.3" y="46" width="2.7" height="14.5"/><rect x="70" y="44.3" width="12.8" height="2.5"/><rect x="75.2" y="46" width="2.5" height="14.5"/></g><g fill="none" stroke="#eab56a" stroke-width="1.6"><path d="M37 23.5L39.5 25.7L42 23.5L44.5 25.7L47 23.5L49.5 25.7L52 23.5"/><path d="M69 25.2H84"/><path d="M7.8 53.9H22.7"/><path d="M37 53.9H52"/><path d="M48.6 61.1L52.6 56.2L56.5 61.1"/><path d="M80.4 61.1L84.7 56.2L88.6 61.1"/></g></svg>
<svg style="left:213px;top:72px;" width="34" height="33" viewBox="0 0 34 33"><path d="M1.1 1.4H32.6V26.6H13.2L6 31.6V26.6H1.1Z" fill="#fff" stroke="#858585" stroke-width="1.2"/><path d="M8.1 9.2H25.6M8.1 14.3H25.6M8.1 19.3H25.6" stroke="#b4b4b4" stroke-width="1.1"/></svg>
<svg style="left:261px;top:69px;" width="40" height="39" viewBox="0 0 40 39"><path d="M1.6 0.5H20L27.3 7.5V34.8H1.6Z" fill="#fff" stroke="#8a8a8a" stroke-width="1.2"/><path d="M20 0.5V7.5H27.3Z" fill="#808080"/><path d="M32 20.5L39 27.3L32.5 31.5L30.5 37.7L26.8 33.5L21.6 37.7L24.7 32.5L21.6 28.3L28.4 26.2Z" fill="#4a7db8"/></svg>
<svg style="left:336px;top:72px;" width="40" height="34" viewBox="0 0 40 34"><rect x="2.6" y="6" width="20" height="2.7" fill="#888"/><rect x="11.4" y="7" width="2.4" height="23.8" fill="#888"/><rect x="30.2" y="2.4" width="2.6" height="29.2" fill="#4a7db8"/><path d="M25.3 2.6H30L31.5 3.8L33 2.6H37.7M25.3 31.4H30L31.5 30.2L33 31.4H37.7" stroke="#4a7db8" stroke-width="2.3" fill="none"/></svg>
<svg style="left:398px;top:67px;" width="22" height="20" viewBox="0 0 22 20"><rect x="6.7" y="1.7" width="13" height="10.7" fill="#fff" stroke="#8a8a8a" stroke-width="1.3"/><path d="M9.5 4.5H17M9.5 6.8H17M9.5 9.2H17" stroke="#9a9a9a" stroke-width="1"/><path d="M5 5.2H2V18.3H8.5" fill="none" stroke="#4a7db8" stroke-width="1.4"/><path d="M7.3 15.2L10.5 18.3L7.3 21" fill="none" stroke="#4a7db8" stroke-width="1.6"/></svg>
<svg style="left:399px;top:96px;" width="21" height="17" viewBox="0 0 21 17"><rect x="1.3" y="1.1" width="17.8" height="13.9" fill="#fff" stroke="#8a8a8a" stroke-width="1.5"/><path d="M4 11L6.4 3.5H7.6L10 11M5 8.5H9" fill="none" stroke="#4a7db8" stroke-width="1.6"/><path d="M11.5 5H16.5M11.5 7.5H16.5M11.5 10H16.5M3.6 12.8H16.5" stroke="#9a9a9a" stroke-width="1"/></svg>
<svg style="left:492px;top:64px;" width="90" height="80" viewBox="0 0 90 80"><g fill="none" stroke="#4a7db8" stroke-width="1.4"><rect x="6.9" y="9.9" width="18.8" height="11.9"/><path d="M38.5 22.5H51.5A3.2 3.2 0 0 0 53 16.5A2.8 2.8 0 0 0 50.5 12A2.3 2.3 0 0 0 46.5 10.5A4.6 4.6 0 0 0 38.7 11.5A2.7 2.7 0 0 0 36.6 15A3.7 3.7 0 0 0 38.5 22.5Z"/><path d="M81.5 12.6L75.3 7L67 14.8H77.8L67 22.2H74L80 17"/><ellipse cx="15.9" cy="39.3" rx="9.5" ry="5.2"/><path d="M51.1 45.6L39.5 34"/><path d="M16 57.4L24.4 64.2L21.5 73.9H10.4L7.3 64.2Z"/><path d="M38.5 59.3L51.5 72.2"/></g><path d="M38.5 33H46.3L38.5 40.8Z" fill="#4a7db8"/></svg>
<svg style="left:594px;top:68px;" width="22" height="22" viewBox="0 0 22 22"><path d="M4.5 14.5L16 3L19 6L7.5 17.5Z" fill="#8c59ae"/><path d="M17 2L18.3 0.7L21.3 3.7L20 5Z" fill="#8c59ae"/><path d="M3.7 15.3L6.7 18.3L1 20.5Z" fill="#8c59ae"/><path d="M15 4L18 7" stroke="#c5d9f1" stroke-width="0.8"/></svg>
<svg style="left:595px;top:93px;" width="21" height="21" viewBox="0 0 21 21"><path d="M9.5 2L17.5 8.5L10.5 16H5L1.5 12.5Z" fill="#8c59ae"/><path d="M4.5 10L9 14.5L7.2 15.8H5.4L2.8 13Z" fill="#fff"/><path d="M4 19.2H19" stroke="#8c59ae" stroke-width="1.6"/></svg>
<svg style="left:690px;top:70px;" width="31" height="38" viewBox="0 0 31 38"><path d="M1.2 0.8H20.5L29.3 9.3V36.3H1.2Z" fill="#fff" stroke="#8a8a8a" stroke-width="1.3"/><path d="M20.5 0.8V9.3H29.3Z" fill="#808080"/><rect x="5.5" y="15" width="20.5" height="9" fill="#ecc27e" stroke="#666" stroke-width="1.1" stroke-dasharray="2 1.6"/></svg>
<svg style="left:752px;top:71px;" width="20" height="17" viewBox="0 0 20 17"><path d="M0.7 0.5V6.5M19.3 0.5V6.5" stroke="#888" stroke-width="1.4"/><path d="M1.5 3.5H18.5" stroke="#68a88d" stroke-width="1.4"/><path d="M1.5 3.5L4.5 1V6ZM18.5 3.5L15.5 1V6Z" fill="#68a88d"/><rect x="0.8" y="9" width="18.5" height="6.7" fill="#fff" stroke="#68a88d" stroke-width="1.5"/><path d="M4 9.8 V11.5 M7.2 9.8 V11 M10.3 9.8 V11.5 M13.5 9.8 V11 M16.5 9.8 V11.5" stroke="#68a88d" stroke-width="1"/></svg>
<svg style="left:752px;top:95px;" width="20" height="18" viewBox="0 0 20 18"><rect x="0.8" y="0.8" width="18.5" height="7.2" fill="#fff" stroke="#888" stroke-width="1.5"/><path d="M3.5 2V6H17" stroke="#68a88d" stroke-width="1.3" fill="none"/><path d="M17.5 6L15 4V8Z" fill="#68a88d"/><rect x="0.8" y="10.8" width="18.5" height="6.7" fill="#fff" stroke="#68a88d" stroke-width="1.5"/><path d="M4 11.6 V13.3 M7.2 11.6 V12.8 M10.3 11.6 V13.3 M13.5 11.6 V12.8 M16.5 11.6 V13.3" stroke="#68a88d" stroke-width="1"/></svg>
<svg style="left:752px;top:123px;" width="20" height="16" viewBox="0 0 20 16"><rect x="7" y="1.2" width="6" height="3.2" fill="#fff" stroke="#888" stroke-width="1.3"/><path d="M0.5 2.8H5.5M14.5 2.8H19.5" stroke="#68a88d" stroke-width="1.2"/><path d="M6 2.8L3.5 0.5V5ZM14 2.8L16.5 0.5V5Z" fill="#68a88d"/><rect x="0.8" y="8.4" width="18.5" height="6.7" fill="#fff" stroke="#68a88d" stroke-width="1.5"/><path d="M4 9.2 V10.9 M7.2 9.2 V10.4 M10.3 9.2 V10.9 M13.5 9.2 V10.4 M16.5 9.2 V10.9" stroke="#68a88d" stroke-width="1"/></svg>
<svg style="left:861px;top:69px;" width="36" height="38" viewBox="0 0 36 38"><path d="M0.6 0.6H19.5L26.3 7V34.5H0.6Z" fill="#fff"/><path d="M0.6 0.6H19.5L26.3 7V21.5M17 34.5H0.6V0.6" fill="none" stroke="#8a8a8a" stroke-width="1.3"/><path d="M19.5 0.6V6.4H26.3Z" fill="#808080"/><path d="M21.7 19.3H32.8V23.1L29.7 23.5L29 27.6H25.5L24.8 23.5L21.7 23.1Z" fill="#d9502f"/><rect x="19" y="29.5" width="16.5" height="3.5" fill="#7a7a7a"/><rect x="19" y="33.7" width="16.5" height="1.1" fill="#d9502f"/><rect x="19" y="36" width="16.5" height="1.5" fill="#d9502f"/></svg>
<svg style="left:912px;top:69px;" width="42" height="38" viewBox="0 0 42 38"><path d="M0.6 0.6H19.5L26.3 7V34.5H0.6Z" fill="#fff"/><path d="M0.6 0.6H19.5L26.3 7V19M16 34.5H0.6V0.6" fill="none" stroke="#8a8a8a" stroke-width="1.3"/><path d="M19.5 0.6V6.4H26.3Z" fill="#808080"/><path d="M28 16L34 19.5L40 20L39 23L34.5 26L34 29L29.5 25.5L30.5 21Z" fill="#d9502f"/><path d="M19.5 23.5L32 33L30 35.5L17.5 26Z" fill="#7a7a7a"/><path d="M17.5 26.5L30 36" stroke="#d9502f" stroke-width="0.9"/><rect x="17" y="35.3" width="16" height="2.2" fill="#d9502f"/></svg>
<svg style="left:874px;top:135px;" width="11" height="5.7" viewBox="0 0 11 5.7"><path d="M0 0H11L5.5 5.7Z" fill="#111"/></svg>
<svg style="left:926px;top:135px;" width="11" height="5.7" viewBox="0 0 11 5.7"><path d="M0 0H11L5.5 5.7Z" fill="#111"/></svg>
<svg style="left:992px;top:70px;" width="38" height="37" viewBox="0 0 38 37"><path d="M0.8 24V0.9H33V19" fill="#fff" stroke="#8a8a8a" stroke-width="1.3"/><path d="M8 8.7H25.6M8 13.7H25.6M8 18.7H25.6" stroke="#b4b4b4" stroke-width="1.2"/><path d="M15 28.8L21.1 35.5L36 20" fill="none" stroke="#68a88d" stroke-width="3.6"/></svg>
<svg style="left:1054px;top:68px;" width="22" height="21" viewBox="0 0 22 21"><path d="M2.5 1.2H19.5V12.5H16.5L14.5 16.5V12.5H2.5Z" fill="#fff" stroke="#8a8a8a" stroke-width="1.3"/><path d="M5.5 4.8H15.5M5.5 7.3H15.5" stroke="#aaa"/><path d="M0.5 13.5H6.5" stroke="#4a7db8" stroke-width="2.4"/><path d="M5.5 9.5L10 13.5L5.5 17.5Z" fill="#4a7db8"/></svg>
<svg style="left:1054px;top:94px;" width="22" height="21" viewBox="0 0 22 21"><path d="M1.5 1.2H17.5V11.5H7L5.5 16V11.5H1.5Z" fill="#fff" stroke="#8a8a8a" stroke-width="1.3"/><path d="M4.5 4.5H14.5M4.5 7H14.5" stroke="#aaa"/><path d="M10 14.5H17" stroke="#4a7db8" stroke-width="2.4"/><path d="M16 10.5L20.5 14.5L16 18.5Z" fill="#4a7db8"/></svg>
<svg style="left:1054px;top:120px;" width="22" height="20" viewBox="0 0 22 20"><path d="M1.5 1.2H17.5V12H6L4.5 16V12H1.5Z" fill="#fff" stroke="#8a8a8a" stroke-width="1.3"/><path d="M4.5 4.5H14.5M4.5 7H14.5" stroke="#aaa"/><rect x="11" y="11" width="10" height="7.5" fill="#f0b860"/><path d="M11 11.5L16 15L21 11.5" stroke="#fff" stroke-width="1" fill="none"/></svg>
<svg style="left:1127px;top:102px;" width="7" height="4" viewBox="0 0 7 4"><path d="M0 0H7L3.5 4Z" fill="#222"/></svg>
<svg style="left:1174px;top:68px;" width="21" height="20" viewBox="0 0 21 20"><path d="M9 18H1.2V1.3H13L15.5 3.8V8" fill="#fff" stroke="#8a8a8a" stroke-width="1.3"/><path d="M13 1.3V4H15.5Z" fill="#808080"/><path d="M9.5 9.5H20V17.5H15.5L14 19L12.5 17.5H9.5Z" fill="#fff" stroke="#4a7db8" stroke-width="1.3"/><path d="M11.8 12.2H17.7M11.8 14.5H17.7" stroke="#aaa"/></svg>
<svg style="left:1174px;top:94px;" width="22" height="20" viewBox="0 0 22 20"><path d="M1 6V1.2H14.5M3.5 8V3.5H17" fill="none" stroke="#4a7db8" stroke-width="1.3" opacity=".8"/><path d="M5.9 5.5H20.5V15.7H13.5L12 18.5L10.5 15.7H5.9Z" fill="#fff" stroke="#4a7db8" stroke-width="1.3"/><path d="M8.5 9H17.5M8.5 11.7H17.5" stroke="#aaa" stroke-width="1.1"/></svg>
<svg style="left:1174px;top:121px;" width="17" height="17" viewBox="0 0 17 17"><rect x="0.6" y="0.6" width="15.4" height="15.6" fill="#fff" stroke="#c8c8c8" stroke-width="1.2"/><path d="M2.8 8L6.3 11.7L13 4.6" fill="none" stroke="#c4c4c4" stroke-width="1.2"/></svg>
<svg style="left:1275px;top:76px;" width="7" height="4" viewBox="0 0 7 4"><path d="M0 0H7L3.5 4Z" fill="#222"/></svg>
<svg style="left:1288px;top:102px;" width="7" height="4" viewBox="0 0 7 4"><path d="M0 0H7L3.5 4Z" fill="#222"/></svg>
<svg style="left:1898px;top:158px;" width="12" height="8" viewBox="0 0 12 8"><path d="M1 6.5L6 1.8L11 6.5" fill="none" stroke="#9a9a9a" stroke-width="1.6"/></svg>
<div class="a" style="left:1073px;top:38px;width:40px;height:22px;background:#f0f0f0;"></div>
<svg style="left:883.5px;top:39px;" width="16" height="19" viewBox="0 0 16 19"><path d="M4.5 13.5C2 11.5 1 9.5 1 7.3A6.5 6.5 0 0 1 14 7.3C14 9.5 13 11.5 10.5 13.5V15H4.5Z" fill="none" stroke="#999" stroke-width="1.2"/><path d="M5 17H10" stroke="#999" stroke-width="1.2"/></svg>
<svg style="left:1522px;top:37px;" width="22" height="21" viewBox="0 0 22 21"><circle cx="10.9" cy="9.9" r="10" fill="#ecb65e"/><path d="M10.9 16.5L5.5 11A3.3 3.3 0 0 1 10.9 6.6A3.3 3.3 0 0 1 16.3 11Z" fill="#fff"/></svg>
<svg style="left:1553px;top:37px;" width="22" height="21" viewBox="0 0 22 21"><path d="M1 1H6.5L8 3H17.9V7.5H4.5L3 18.6H1Z" fill="#f0c880"/><path d="M3.5 8H17.9V13L14 18.6H1.5Z" fill="#f0c880"/><path d="M2 4H16V8" fill="#fff" opacity="0"/><circle cx="13.7" cy="12.8" r="4.6" fill="#fff" stroke="#888" stroke-width="1.3"/><path d="M16.8 16.2L20.3 19.5" stroke="#888" stroke-width="1.8"/></svg>
<div class="a" style="left:1581px;top:34px;width:150px;height:26px;background:#fff;border:1px solid #9e9e9e;box-sizing:border-box"></div>
<div class="t" style="left:1585.27px;top:39.00px;font-size:15.00px;line-height:17px;font-family:'Liberation Sans',sans-serif;color:#555">Find</div>
<svg style="left:1708px;top:37px;" width="21" height="21" viewBox="0 0 21 21"><circle cx="13.4" cy="6.8" r="4.7" fill="#fff" stroke="#3792cf" stroke-width="2"/><path d="M10.2 10.5L2.3 17.8" stroke="#2f62a8" stroke-width="2.8" stroke-linecap="round"/></svg>
<svg style="left:1736px;top:37px;" width="21" height="21" viewBox="0 0 21 21"><path d="M16.79 7.71L17.14 8.82L19.56 8.69L19.56 11.91L17.14 11.78L16.78 12.92L16.24 13.94L18.04 15.57L15.77 17.84L14.14 16.04L13.09 16.59L11.98 16.94L12.11 19.36L8.89 19.36L9.02 16.94L7.88 16.58L6.86 16.04L5.23 17.84L2.96 15.57L4.76 13.94L4.21 12.89L3.86 11.78L1.44 11.91L1.44 8.69L3.86 8.82L4.22 7.68L4.76 6.66L2.96 5.03L5.23 2.76L6.86 4.56L7.91 4.01L9.02 3.66L8.89 1.24L12.11 1.24L11.98 3.66L13.12 4.02L14.14 4.56L15.77 2.76L18.04 5.03L16.24 6.66Z" fill="#fff" stroke="#3a3a3a" stroke-width="1.1" stroke-linejoin="round"/><circle cx="10.5" cy="10.3" r="2.5" fill="none" stroke="#3a3a3a" stroke-width="1.2"/></svg>
<svg style="left:1761.5px;top:44.5px;" width="6.5" height="4" viewBox="0 0 6.5 4"><path d="M0 0H6.5L3.25 4Z" fill="#222"/></svg>
<svg style="left:1779px;top:37px;" width="13" height="19" viewBox="0 0 13 19"><path d="M10.5 1.5V17.5L1.5 9.5Z" fill="none" stroke="#b8bcc8" stroke-width="1.2"/></svg>
<svg style="left:1813px;top:37px;" width="13" height="19" viewBox="0 0 13 19"><path d="M1.5 1.5V17.5L10.5 9.5Z" fill="none" stroke="#b8bcc8" stroke-width="1.2"/></svg>
<svg style="left:1841px;top:37px;" width="19" height="21" viewBox="0 0 19 21"><path d="M3 15.5V8.5A6.5 6.5 0 0 1 16 8.5V15.5L18 17.3H1Z" fill="#b7d4f1" stroke="#3d7ac0" stroke-width="1.3"/><circle cx="9.5" cy="1.5" r="1.2" fill="#3d7ac0"/><path d="M7.5 18.7H11.5L9.5 20.3Z" fill="#3d7ac0"/></svg>
<svg style="left:1865.5px;top:44.5px;" width="6.5" height="4" viewBox="0 0 6.5 4"><path d="M0 0H6.5L3.25 4Z" fill="#222"/></svg>
<svg style="left:1880px;top:37px;" width="21" height="20" viewBox="0 0 21 20"><rect x="0" y="0" width="20.4" height="20" fill="#3a3a3a"/><ellipse cx="10.2" cy="7.3" rx="4" ry="4.8" fill="#fff"/><path d="M2.5 20C3 15.5 6 13.5 10.2 13.5C14.4 13.5 17.4 15.5 18 20Z" fill="#fff"/></svg>
<svg style="left:1909px;top:44.5px;" width="6.5" height="4" viewBox="0 0 6.5 4"><path d="M0 0H6.5L3.25 4Z" fill="#222"/></svg>
<svg style="left:29.5px;top:223.5px;" width="7" height="11.5" viewBox="0 0 7 11.5"><path d="M0 0L6.6 5.7L0 11.4Z" fill="#111"/></svg>
<svg style="left:11px;top:276px;" width="24" height="29" viewBox="0 0 24 29"><path d="M1.5 1H17.5L22.5 6V27.5H1.5Z" fill="#fff" stroke="#8a8a8a" stroke-width="1.3"/><path d="M17.5 0.5V6H23Z" fill="#808080"/><path d="M1 0.5H7.5V15L4.25 11.5L1 15Z" fill="#8c59ae"/></svg>
<svg style="left:10px;top:333px;" width="25" height="29" viewBox="0 0 25 29"><g fill="none" stroke="#4a7db8" stroke-width="1.1"><path d="M1 21V1.2H19.5"/><path d="M3.5 24V4H22"/></g><rect x="6.3" y="7" width="17.2" height="20.6" fill="#fff" stroke="#4a7db8" stroke-width="1.3"/></svg>
<svg style="left:8px;top:391px;" width="29" height="26" viewBox="0 0 29 26"><path d="M8 15.5H28L21 24.5H1Z" fill="#fff" stroke="#4a7db8" stroke-width="1.1"/><path d="M8 8.5H28L21 17.5H1Z" fill="#4a7db8"/><path d="M8 1H28L21 9.5H1Z" fill="#fff" stroke="#4a7db8" stroke-width="1.1"/></svg>
<svg style="left:8px;top:446px;" width="28" height="27" viewBox="0 0 28 27"><path d="M11 11H27V22H25V25.5L22 22H11Z" fill="#7a7a7a"/><path d="M0.5 0.5H20.5V16H6L3 19.5V16H0.5Z" fill="#eeb462" stroke="#f0f0f0" stroke-width="1"/><path d="M4 5H17M4 8.2H17M4 11.4H17" stroke="#fff" stroke-width="1.3"/></svg>
<svg style="left:11px;top:502px;" width="25" height="27" viewBox="0 0 25 27"><path d="M14.5 7.5L5.5 16.5A2.5 2.5 0 0 0 9 20L19.5 9.5A4.5 4.5 0 0 0 13 3L3 13A6.3 6.3 0 0 0 12 22L20.5 13.5" fill="none" stroke="#4a7db8" stroke-width="1.9" stroke-linecap="round"/></svg>
<svg style="left:8px;top:557px;" width="31" height="30" viewBox="0 0 31 30"><rect x="1" y="0.8" width="20.5" height="26.5" fill="#fff" stroke="#8a8a8a" stroke-width="1.3"/><path d="M6 12A5 5 0 0 1 15.5 9.5M8 12.5A3 3 0 0 1 13.5 10.5M10.5 13A1.2 1.2 0 0 1 12 12" fill="none" stroke="#a06ac0" stroke-width="1.2"/><path d="M13.8 14.2A3 3 0 0 1 9.5 14" fill="none" stroke="#a06ac0" stroke-width="1.2"/><path d="M4 21H15M4 23.5H15" stroke="#aaa" stroke-width="1"/><circle cx="21.6" cy="22.6" r="6.2" fill="#4a7db8"/><path d="M18.5 26L24.8 19.3L22.5 24.5Z" fill="#fff"/></svg>
<svg style="left:11px;top:612px;" width="23" height="29" viewBox="0 0 23 29"><path d="M5 14V8A6 6 0 0 1 17 8V14" fill="none" stroke="#f0c47e" stroke-width="2.6"/><rect x="0" y="13.5" width="22.3" height="14.8" rx="1.5" fill="#f0c47e"/><path d="M11.15 17A2 2 0 0 1 12.5 20.3L13 23.5H9.3L9.8 20.3A2 2 0 0 1 11.15 17Z" fill="#fff"/></svg>
<svg style="left:9px;top:671px;" width="28" height="29" viewBox="0 0 28 29"><g stroke="#2f6db5" stroke-linecap="round"><path d="M11 6.5L15.5 1.5" stroke-width="2.6"/><path d="M14.5 11.5L21 4.5" stroke-width="4.5"/><path d="M3.5 23L11 16" stroke-width="4.5"/><path d="M1.5 24.8L3.5 23" stroke-width="2"/></g><path d="M17 20L13.5 26.5M19.5 21.5L18 25.5M21 21.5L22.5 25.5M23 20.5L25.5 26.5" stroke="#8a55ad" stroke-width="2"/><circle cx="19.2" cy="18.7" r="3.8" fill="#fde06a" stroke="#8a55ad" stroke-width="1.8"/></svg>
<svg style="left:45px;top:546px;" width="8" height="46" viewBox="0 0 8 46"><g fill="#5a5a5a"><rect x="3" y="0" width="1.4" height="1.4"/><rect x="5.1" y="0" width="1.4" height="1.4"/><rect x="3" y="3" width="1.4" height="1.4"/><rect x="5.1" y="3" width="1.4" height="1.4"/><rect x="3" y="6" width="1.4" height="1.4"/><rect x="5.1" y="6" width="1.4" height="1.4"/><rect x="3" y="9" width="1.4" height="1.4"/><rect x="5.1" y="9" width="1.4" height="1.4"/><rect x="3" y="12" width="1.4" height="1.4"/><rect x="5.1" y="12" width="1.4" height="1.4"/><rect x="3" y="15" width="1.4" height="1.4"/><rect x="5.1" y="15" width="1.4" height="1.4"/><rect x="3" y="18" width="1.4" height="1.4"/><rect x="5.1" y="18" width="1.4" height="1.4"/><rect x="3" y="21" width="1.4" height="1.4"/><rect x="5.1" y="21" width="1.4" height="1.4"/><rect x="3" y="24" width="1.4" height="1.4"/><rect x="5.1" y="24" width="1.4" height="1.4"/><rect x="3" y="27" width="1.4" height="1.4"/><rect x="5.1" y="27" width="1.4" height="1.4"/><rect x="3" y="30" width="1.4" height="1.4"/><rect x="5.1" y="30" width="1.4" height="1.4"/><rect x="3" y="33" width="1.4" height="1.4"/><rect x="5.1" y="33" width="1.4" height="1.4"/><rect x="3" y="36" width="1.4" height="1.4"/><rect x="5.1" y="36" width="1.4" height="1.4"/><rect x="3" y="39" width="1.4" height="1.4"/><rect x="5.1" y="39" width="1.4" height="1.4"/><rect x="3" y="42" width="1.4" height="1.4"/><rect x="5.1" y="42" width="1.4" height="1.4"/></g></svg>
<div class="a" style="left:1903px;top:214px;width:17px;height:9px;background:#dcdcdc;border:1px solid #555;box-sizing:border-box"></div>
<svg style="left:1907.5px;top:230.5px;" width="8" height="7" viewBox="0 0 8 7"><path d="M0.8 5.8L4 2L7.2 5.8" fill="none" stroke="#555" stroke-width="1.8"/></svg>
<svg style="left:1907.5px;top:985px;" width="8" height="7" viewBox="0 0 8 7"><path d="M0.8 1.2L4 5L7.2 1.2" fill="none" stroke="#555" stroke-width="1.8"/></svg>
<div class="a" style="left:53px;top:982px;width:9px;height:14px;background:#dcdcdc;border:1px solid #555;border-bottom:none;box-sizing:border-box"></div>
<svg style="left:68.5px;top:987px;" width="7" height="7.5" viewBox="0 0 7 7.5"><path d="M5.8 0.8L2 3.75L5.8 6.7" fill="none" stroke="#555" stroke-width="1.8"/></svg>
<svg style="left:1888px;top:987px;" width="7" height="7.5" viewBox="0 0 7 7.5"><path d="M1.2 0.8L5 3.75L1.2 6.7" fill="none" stroke="#555" stroke-width="1.8"/></svg>
<svg style="left:775px;top:1005px;" width="17" height="17" viewBox="0 0 17 17"><path d="M0.2 8.3L11 0.5V16Z" fill="#a0a0a0"/><rect x="12.2" y="0.5" width="3.8" height="16" fill="#a0a0a0"/></svg>
<svg style="left:808px;top:1005px;" width="11" height="17" viewBox="0 0 11 17"><path d="M0.7 8.3L10 0.5V16Z" fill="#a0a0a0"/></svg>
<div class="a" style="left:832px;top:1001px;width:142px;height:24px;background:#fff;border:1px solid #a8a8a8;box-sizing:border-box"></div>
<div class="t" style="left:837.53px;top:1004.70px;font-size:16.00px;line-height:17px;font-family:'Liberation Sans',sans-serif;color:#000">1 /</div>
<div class="t" style="left:861.63px;top:1004.70px;font-size:16.00px;line-height:17px;font-family:'Liberation Sans',sans-serif;color:#000">4</div>
<svg style="left:962.5px;top:1012px;" width="7" height="3.5" viewBox="0 0 7 3.5"><path d="M0 0H7L3.5 3.5Z" fill="#222"/></svg>
<svg style="left:984.5px;top:1005px;" width="10" height="17" viewBox="0 0 10 17"><path d="M0.3 0.5L9.8 8.3L0.3 16Z" fill="#222"/></svg>
<svg style="left:1013px;top:1005px;" width="16" height="17" viewBox="0 0 16 17"><rect x="0.2" y="0.5" width="4.2" height="16" fill="#222"/><path d="M5.4 0.5L15.7 8.3L5.4 16Z" fill="#222"/></svg>
<svg style="left:1042px;top:1003px;" width="22" height="21" viewBox="0 0 22 21"><path d="M1.5 12V1.5H9" fill="none" stroke="#888" stroke-width="1.2"/><rect x="1" y="1" width="8" height="1.6" fill="#3d7ac0"/><rect x="6.5" y="8.3" width="14" height="11.8" fill="#fff" stroke="#777" stroke-width="1.3"/><rect x="6" y="8" width="15" height="2" fill="#777"/><path d="M19.5 4.5H13M15.5 1.8L12.5 4.5L15.5 7.2" fill="none" stroke="#5aaa8a" stroke-width="1.7"/></svg>
<svg style="left:1075px;top:1003px;" width="22" height="21" viewBox="0 0 22 21"><path d="M1.5 12V1.5H13V4.5" fill="none" stroke="#cfcfcf" stroke-width="1.2"/><rect x="6.5" y="7.5" width="13.5" height="12.5" fill="#f6f6f6" stroke="#cfcfcf" stroke-width="1.2"/><rect x="6.5" y="7" width="13.5" height="1.6" fill="#a9c6e8"/><path d="M1.5 16H8.5M6 13.3L9 16L6 18.7" fill="none" stroke="#a8d5c0" stroke-width="1.7"/></svg>
<div class="a" style="left:1525px;top:1002.6px;width:30px;height:21.8px;background:#c5d9f1;"></div>
<svg style="left:1500px;top:1004px;" width="16" height="20" viewBox="0 0 16 20"><rect x="1" y="1" width="13.5" height="17.5" fill="#fff" stroke="#8a8a8a" stroke-width="1.3"/><path d="M4 5H11.5" stroke="#9a9a9a" stroke-width="1"/><path d="M4 8.2H11.5" stroke="#9a9a9a" stroke-width="1"/><path d="M4 11.4H11.5" stroke="#9a9a9a" stroke-width="1"/><path d="M4 14.6H11.5" stroke="#9a9a9a" stroke-width="1"/></svg>
<svg style="left:1531px;top:1003px;" width="18" height="22" viewBox="0 0 18 22"><rect x="1.5" y="0.8" width="14" height="11" fill="#fff" stroke="#8a8a8a" stroke-width="1.3"/><path d="M4.5 4H12.5" stroke="#9a9a9a" stroke-width="1"/><path d="M4.5 7.2H12.5" stroke="#9a9a9a" stroke-width="1"/><path d="M4.5 10.4H12.5" stroke="#9a9a9a" stroke-width="1"/><rect x="1.5" y="14.5" width="14" height="8" fill="#fff" stroke="#8a8a8a" stroke-width="1.3"/><path d="M4.5 18H12.5" stroke="#9a9a9a" stroke-width="1"/></svg>
<svg style="left:1561px;top:1004px;" width="21" height="20" viewBox="0 0 21 20"><rect x="0.8" y="1" width="8.5" height="17.5" fill="#fff" stroke="#8a8a8a" stroke-width="1.3"/><rect x="11.3" y="1" width="8.5" height="17.5" fill="#fff" stroke="#8a8a8a" stroke-width="1.3"/><path d="M3 5H7" stroke="#9a9a9a" stroke-width="1"/><path d="M3 8.2H7" stroke="#9a9a9a" stroke-width="1"/><path d="M3 11.4H7" stroke="#9a9a9a" stroke-width="1"/><path d="M3 14.6H7" stroke="#9a9a9a" stroke-width="1"/><path d="M13.5 5H17.5" stroke="#9a9a9a" stroke-width="1"/><path d="M13.5 8.2H17.5" stroke="#9a9a9a" stroke-width="1"/><path d="M13.5 11.4H17.5" stroke="#9a9a9a" stroke-width="1"/><path d="M13.5 14.6H17.5" stroke="#9a9a9a" stroke-width="1"/></svg>
<svg style="left:1593px;top:1003px;" width="21" height="22" viewBox="0 0 21 22"><path d="M9 1V10H1M12 1V10H20M9 21V13H1M12 21V13H20" fill="none" stroke="#8a8a8a" stroke-width="1.3"/><path d="M1 3.5H7" stroke="#9a9a9a" stroke-width="1"/><path d="M1 6.7H7" stroke="#9a9a9a" stroke-width="1"/><path d="M14 3.5H20" stroke="#9a9a9a" stroke-width="1"/><path d="M14 6.7H20" stroke="#9a9a9a" stroke-width="1"/><path d="M1 16.5H7" stroke="#9a9a9a" stroke-width="1"/><path d="M1 19.7H7" stroke="#9a9a9a" stroke-width="1"/><path d="M14 16.5H20" stroke="#9a9a9a" stroke-width="1"/><path d="M14 19.7H20" stroke="#9a9a9a" stroke-width="1"/></svg>
<svg style="left:1717.5px;top:1010px;" width="7" height="4.5" viewBox="0 0 7 4.5"><path d="M0 0H7L3.5 4.5Z" fill="#222"/></svg>
<svg style="left:1728px;top:1001px;" width="21" height="21" viewBox="0 0 21 21"><circle cx="10.3" cy="10.3" r="9.3" fill="none" stroke="#333" stroke-width="1.2"/><path d="M5.5 10.3H15.1" stroke="#333" stroke-width="1.3"/></svg>
<div class="a" style="left:1756px;top:1011.5px;width:116px;height:1.3px;background:#333;"></div>
<div class="a" style="left:1813px;top:1008px;width:1.2px;height:9px;background:#333;"></div>
<div class="a" style="left:1830.2px;top:1005.8px;width:5.5px;height:12px;background:#222;"></div>
<svg style="left:1876px;top:1001px;" width="21" height="21" viewBox="0 0 21 21"><circle cx="10.4" cy="10.3" r="9.3" fill="none" stroke="#333" stroke-width="1.2"/><path d="M5.6 10.3H15.2M10.4 5.5V15.1" stroke="#333" stroke-width="1.3"/></svg>
<svg style="left:19px;top:1044px;" width="22" height="22" viewBox="0 0 22 22"><path d="M0.75 3.2L10 1.9V10.2H0.75ZM11 1.75L21.25 0.5V10.2H11ZM0.75 11.2H10V19.3L0.75 18ZM11 11.2H21.25V21L11 19.5Z" fill="#fff"/></svg>
<svg style="left:79px;top:1044px;" width="22" height="22" viewBox="0 0 22 22"><circle cx="13.75" cy="8.1" r="6.5" fill="none" stroke="#fff" stroke-width="1.35"/><path d="M9.2 12.8L1 20.8" stroke="#fff" stroke-width="1.4"/></svg>
<svg style="left:139px;top:1044px;" width="22" height="22" viewBox="0 0 22 22"><path d="M1 1V3M1 19V21M13 1V3M13 19V21M0.5 3H13.5M0.5 19H13.5" fill="none" stroke="#fff" stroke-width="1.3"/><rect x="1" y="7" width="12" height="8" fill="none" stroke="#fff" stroke-width="1.3"/><path d="M19 1V21" stroke="#fff" stroke-width="1.3"/><rect x="17.5" y="7" width="3" height="2.5" fill="#fff"/></svg>
<svg style="left:200px;top:1042px;" width="28" height="24" viewBox="0 0 28 24"><path d="M0 2.5Q0 1 1.5 1H11L13 3.3H26.5Q27.5 3.3 27.5 4.5V22.5Q27.5 23.6 26.5 23.6H1.5Q0 23.6 0 22.5Z" fill="#f8d25c"/><path d="M0 2.5Q0 1 1.5 1H11L13 3.3H12V5.5H0Z" fill="#e8a418"/><path d="M5 23.6V13.5Q5 12.3 6.3 12.3H21.5Q22.7 12.3 22.7 13.5V23.6H18.5V17.5H9.2V23.6Z" fill="#3a9de2"/></svg>
<div class="a" style="left:188.75px;top:1077px;width:40.6px;height:3px;background:#f5bdac;"></div>
<div class="a" style="left:229.4px;top:1077px;width:10.6px;height:3px;background:#c49b90;"></div>
<svg style="left:262px;top:1042px;" width="28" height="27" viewBox="0 0 28 27"><path d="M2 13C2.5 5.5 8 1 14.5 1C21.5 1 26.5 6 26.5 13.5V16.2H9.5C10 20.5 13.5 23 17.5 23C20.5 23 23.5 22 25.5 20.5V25.2C23 26.5 20 27 17 27C9 27 2.5 22 2.5 15C2.5 11 4.5 8.5 7.5 7C6 9 5.5 10.5 5.5 12.2H19.3C19.3 8.5 17 6.2 13.5 6.2C9 6.2 5 9 2 13Z" fill="#0b79d6"/></svg>
<svg style="left:322px;top:1040px;" width="29" height="28" viewBox="0 0 29 28"><rect x="0.5" y="0.5" width="28" height="27" rx="1.5" fill="#f5a173"/><rect x="0.5" y="0.5" width="28" height="13" rx="1.5" fill="#fbd0b6"/><rect x="0.5" y="0.5" width="28" height="27" rx="1.5" fill="none" stroke="#c64a1a" stroke-width="1"/><path d="M4.5 20V4H10A4.3 4.3 0 0 1 10 12.6H7.5V20Z" fill="#d14b1a"/><path d="M7.5 6.5V10.2H9.8A1.85 1.85 0 0 0 9.8 6.5Z" fill="#fbd0b6"/><path d="M12 14.5L27 11.5L28.5 25L13 27Z" fill="#fff" opacity=".95"/><circle cx="19" cy="16.5" r="3" fill="#e05a2a"/><path d="M15 22H25M15 24.2H22" stroke="#e05a2a" stroke-width="1"/></svg>
<svg style="left:385px;top:1040px;" width="29" height="28" viewBox="0 0 29 28"><rect x="0.5" y="0.5" width="27.5" height="27" rx="1.5" fill="#8fcf8c"/><rect x="0.5" y="0.5" width="27.5" height="12" rx="1.5" fill="#d6f0d2"/><rect x="0.5" y="0.5" width="27.5" height="27" rx="1.5" fill="none" stroke="#3a8a3a" stroke-width="1"/><path d="M3.5 3.5H8.5L11.5 9L14.5 3.5H19L14 12L19.5 21H14.5L11.3 15.3L8 21H3L8.7 12Z" fill="#1f7a2a"/><path d="M13 15L27.5 12L28.5 25.5L14 27.5Z" fill="#fff"/><path d="M15.5 18.5H26.5M15.5 21.5H26.5M15.5 24.5H26.5M20 16V26" stroke="#3a9a3a" stroke-width="1"/></svg>
<svg style="left:447px;top:1040px;" width="33" height="32" viewBox="0 0 33 32"><circle cx="13.5" cy="13.8" r="12.7" fill="#db4437"/><path d="M13.5 13.8L2.5 20.2A12.7 12.7 0 0 0 13.5 26.5Z" fill="#0f9d58"/><path d="M1 13.8A12.7 12.7 0 0 0 2.5 20.2L13.5 13.8Z" fill="#0f9d58"/><path d="M13.5 13.8L26.2 13.8A12.7 12.7 0 0 0 24.5 7.4Z" fill="#f4b400"/><circle cx="13.5" cy="13.8" r="5.4" fill="#fff"/><circle cx="13.5" cy="13.8" r="4.2" fill="#4285f4"/><circle cx="21.5" cy="22.5" r="9.3" fill="#f3e6e6"/><path d="M14 19C15 14.5 18 13.5 21.5 13.5C25 13.5 28 15 29 19C27 18 25 17.5 21.5 17.5C18 17.5 16 18 14 19Z" fill="#d8c8c8"/><path d="M16.5 24C17 21 19 20 21.5 20C24 20 26 21 26.5 24Q24 22.5 21.5 22.5Q19 22.5 16.5 24Z" fill="#3a3a3a"/><circle cx="19.3" cy="25" r="1" fill="#333"/><circle cx="23.7" cy="25" r="1" fill="#333"/></svg>
<div class="a" style="left:375px;top:1077px;width:50.8px;height:3px;background:#f5bdac;"></div>
<div class="a" style="left:437px;top:1077px;width:51px;height:3px;background:#f5bdac;"></div>
<div class="a" style="left:494.2px;top:1030px;width:60.8px;height:47px;background:#555a60;"></div>
<div class="a" style="left:494.2px;top:1077px;width:60.8px;height:3px;background:#f5bdac;"></div>
<svg style="left:508.5px;top:1039.5px;" width="31" height="31" viewBox="0 0 31 31"><g transform="scale(0.9688)"><path d="M0.5 0.5H22.5L30.5 8.5V30.5H0.5Z" fill="#f38a1e"/><path d="M23.5 0.5L30.5 7.5H23.5Z" fill="#f5901e"/><path d="M22.8 0V8.2H31" fill="none" stroke="#555a60" stroke-width="1.2"/><path d="M15.5 3.5L27 15L15.5 26.5L4 15Z" fill="#f7a550" opacity=".55"/><circle cx="15" cy="14.8" r="8" fill="#fff"/><circle cx="16.9" cy="14.6" r="4.7" fill="#f38a1e"/><path d="M17 6.5Q21.5 7.5 23 11.5L20.5 11.8Q19 9.8 17 10Z" fill="#f38a1e"/><path d="M14.8 17.8Q17.8 18.6 19.8 15.8L20.6 16.5Q19.5 20 16.2 20.2Z" fill="#fff"/><text x="15.5" y="28" font-family="Liberation Sans" font-size="7" font-weight="bold" fill="#fff" text-anchor="middle">PDF</text></g></svg>
<svg style="left:1605px;top:1044px;" width="20" height="21" viewBox="0 0 20 21"><circle cx="13.8" cy="4.5" r="3.2" fill="none" stroke="#fff" stroke-width="1.3"/><path d="M8.8 13.5C9.5 10 11.5 8.5 13.8 8.5C16.3 8.5 18.4 10.2 19 13" fill="none" stroke="#fff" stroke-width="1.3"/><circle cx="6" cy="10.3" r="3.2" fill="none" stroke="#dfe3e8" stroke-width="1.3"/><path d="M0.8 19.8C1.5 16.3 3.5 14.5 6 14.5C8.5 14.5 10.5 16.3 11.2 19.8" fill="none" stroke="#fff" stroke-width="1.3"/></svg>
<svg style="left:1656px;top:1049px;" width="18" height="11" viewBox="0 0 18 11"><path d="M1 9.5L8.7 1.6L16.4 9.5" fill="none" stroke="#fff" stroke-width="1.3"/></svg>
<svg style="left:1694px;top:1044px;" width="22" height="22" viewBox="0 0 22 22"><rect x="1" y="1" width="20.3" height="20.1" fill="#f6d3d3"/><rect x="1" y="1" width="20.3" height="20.1" fill="none" stroke="#e8a8a8" stroke-width="1"/><path d="M5 4.5L10.5 18L16.8 4.5" fill="none" stroke="#d02a2a" stroke-width="2.2"/></svg>
<div class="t" style="left:1732.27px;top:1047.00px;font-size:15.00px;line-height:17px;font-family:'Liberation Sans',sans-serif;color:#fff;transform:scaleX(0.94);transform-origin:left">ENG</div>
<div class="t" style="left:1785.35px;top:1034.60px;font-size:15.00px;line-height:17px;font-family:'Liberation Sans',sans-serif;color:#fff;transform:scaleX(0.95);transform-origin:left">8:00 PM</div>
<div class="t" style="left:1773.66px;top:1057.80px;font-size:15.00px;line-height:17px;font-family:'Liberation Sans',sans-serif;color:#fff;transform:scaleX(1.015);transform-origin:left">10/12/2021</div>
<svg style="left:1867px;top:1044px;" width="35" height="32" viewBox="0 0 35 32"><path d="M1.5 1H22.5V19H11L6.5 22.5V19H1.5Z" fill="#fff"/><path d="M5 5.5H19M5 9H19M5 12.5H19" stroke="#262b31" stroke-width="1.3"/><circle cx="21.7" cy="20.4" r="8.8" fill="#262b31" stroke="#8d9196" stroke-width="1.2"/><path d="M19.5 17.5L22.5 15.5V25.5" fill="none" stroke="#fff" stroke-width="1.8"/></svg>
<div class="a" style="left:1913.5px;top:1030px;width:1px;height:50px;background:#5b6066;"></div>
</body></html>
